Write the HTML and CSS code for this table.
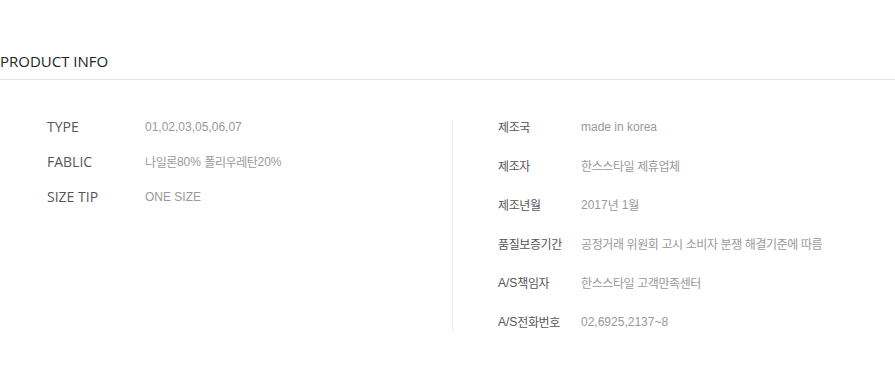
FILE: index.html
```html
<!DOCTYPE html>
<html lang="ko">
<head>
<meta charset="utf-8">
<title>Product Info</title>
<link rel="stylesheet" href="styles.css">
</head>
<body>
<section class="product-info">
  <h2 class="title">PRODUCT INFO</h2>
  <div class="info">
    <dl class="spec">
      <dt>TYPE</dt><dd>01,02,03,05,06,07</dd>
      <dt>FABLIC</dt><dd><span class="ko">나일론</span>80% <span class="ko">폴리우레탄</span>20%</dd>
      <dt>SIZE TIP</dt><dd>ONE SIZE</dd>
    </dl>
    <dl class="notice">
      <dt><span class="ko">제조국</span></dt><dd>made in korea</dd>
      <dt><span class="ko">제조자</span></dt><dd><span class="ko">한스스타일 제휴업체</span></dd>
      <dt><span class="ko">제조년월</span></dt><dd>2017<span class="ko">년</span> 1<span class="ko">월</span></dd>
      <dt><span class="ko">품질보증기간</span></dt><dd><span class="ko">공정거래 위원회 고시 소비자 분쟁 해결기준에 따름</span></dd>
      <dt>A/S<span class="ko">책임자</span></dt><dd><span class="ko">한스스타일 고객만족센터</span></dd>
      <dt>A/S<span class="ko">전화번호</span></dt><dd>02,6925,2137~8</dd>
    </dl>
  </div>
</section>
</body>
</html>
```

FILE: styles.css
```css
html, body {
  margin: 0;
  padding: 0;
  background: #fff;
}

.product-info {
  padding-top: 51px;
  font-family: "Liberation Sans", "Noto Sans CJK KR", sans-serif;
}

.title {
  margin: 0;
  padding: 0 0 8px 0;
  font-family: "Open Sans", "Noto Sans CJK KR", sans-serif;
  font-size: 15px;
  font-weight: 400;
  line-height: 20px;
  color: #222;
  border-bottom: 1px solid #e3e3e3;
}

.info {
  display: flex;
  margin-top: 40px;
}

.spec,
.notice {
  margin: 0;
  display: grid;
  align-content: start;
  grid-auto-rows: 14px;
  line-height: 14px;
}

.spec {
  width: 405px;
  padding-left: 47px;
  grid-template-columns: 98px auto;
  row-gap: 21px;
}

.spec dt {
  font-family: "Open Sans", sans-serif;
  font-size: 14px;
  color: #555;
}

.spec dd {
  margin: 0;
  font-size: 12px;
  color: #999;
}

.notice {
  border-left: 1px solid #eee;
  padding-left: 45px;
  padding-bottom: 3px;
  grid-template-columns: 83px auto;
  row-gap: 25px;
  font-size: 12px;
}

.notice dt {
  color: #555;
}

.notice dd {
  margin: 0;
  color: #999;
}

.ko {
  font-family: "Noto Sans CJK KR", sans-serif;
  letter-spacing: -0.4px;
  vertical-align: top;
  line-height: 14px;
}
```
